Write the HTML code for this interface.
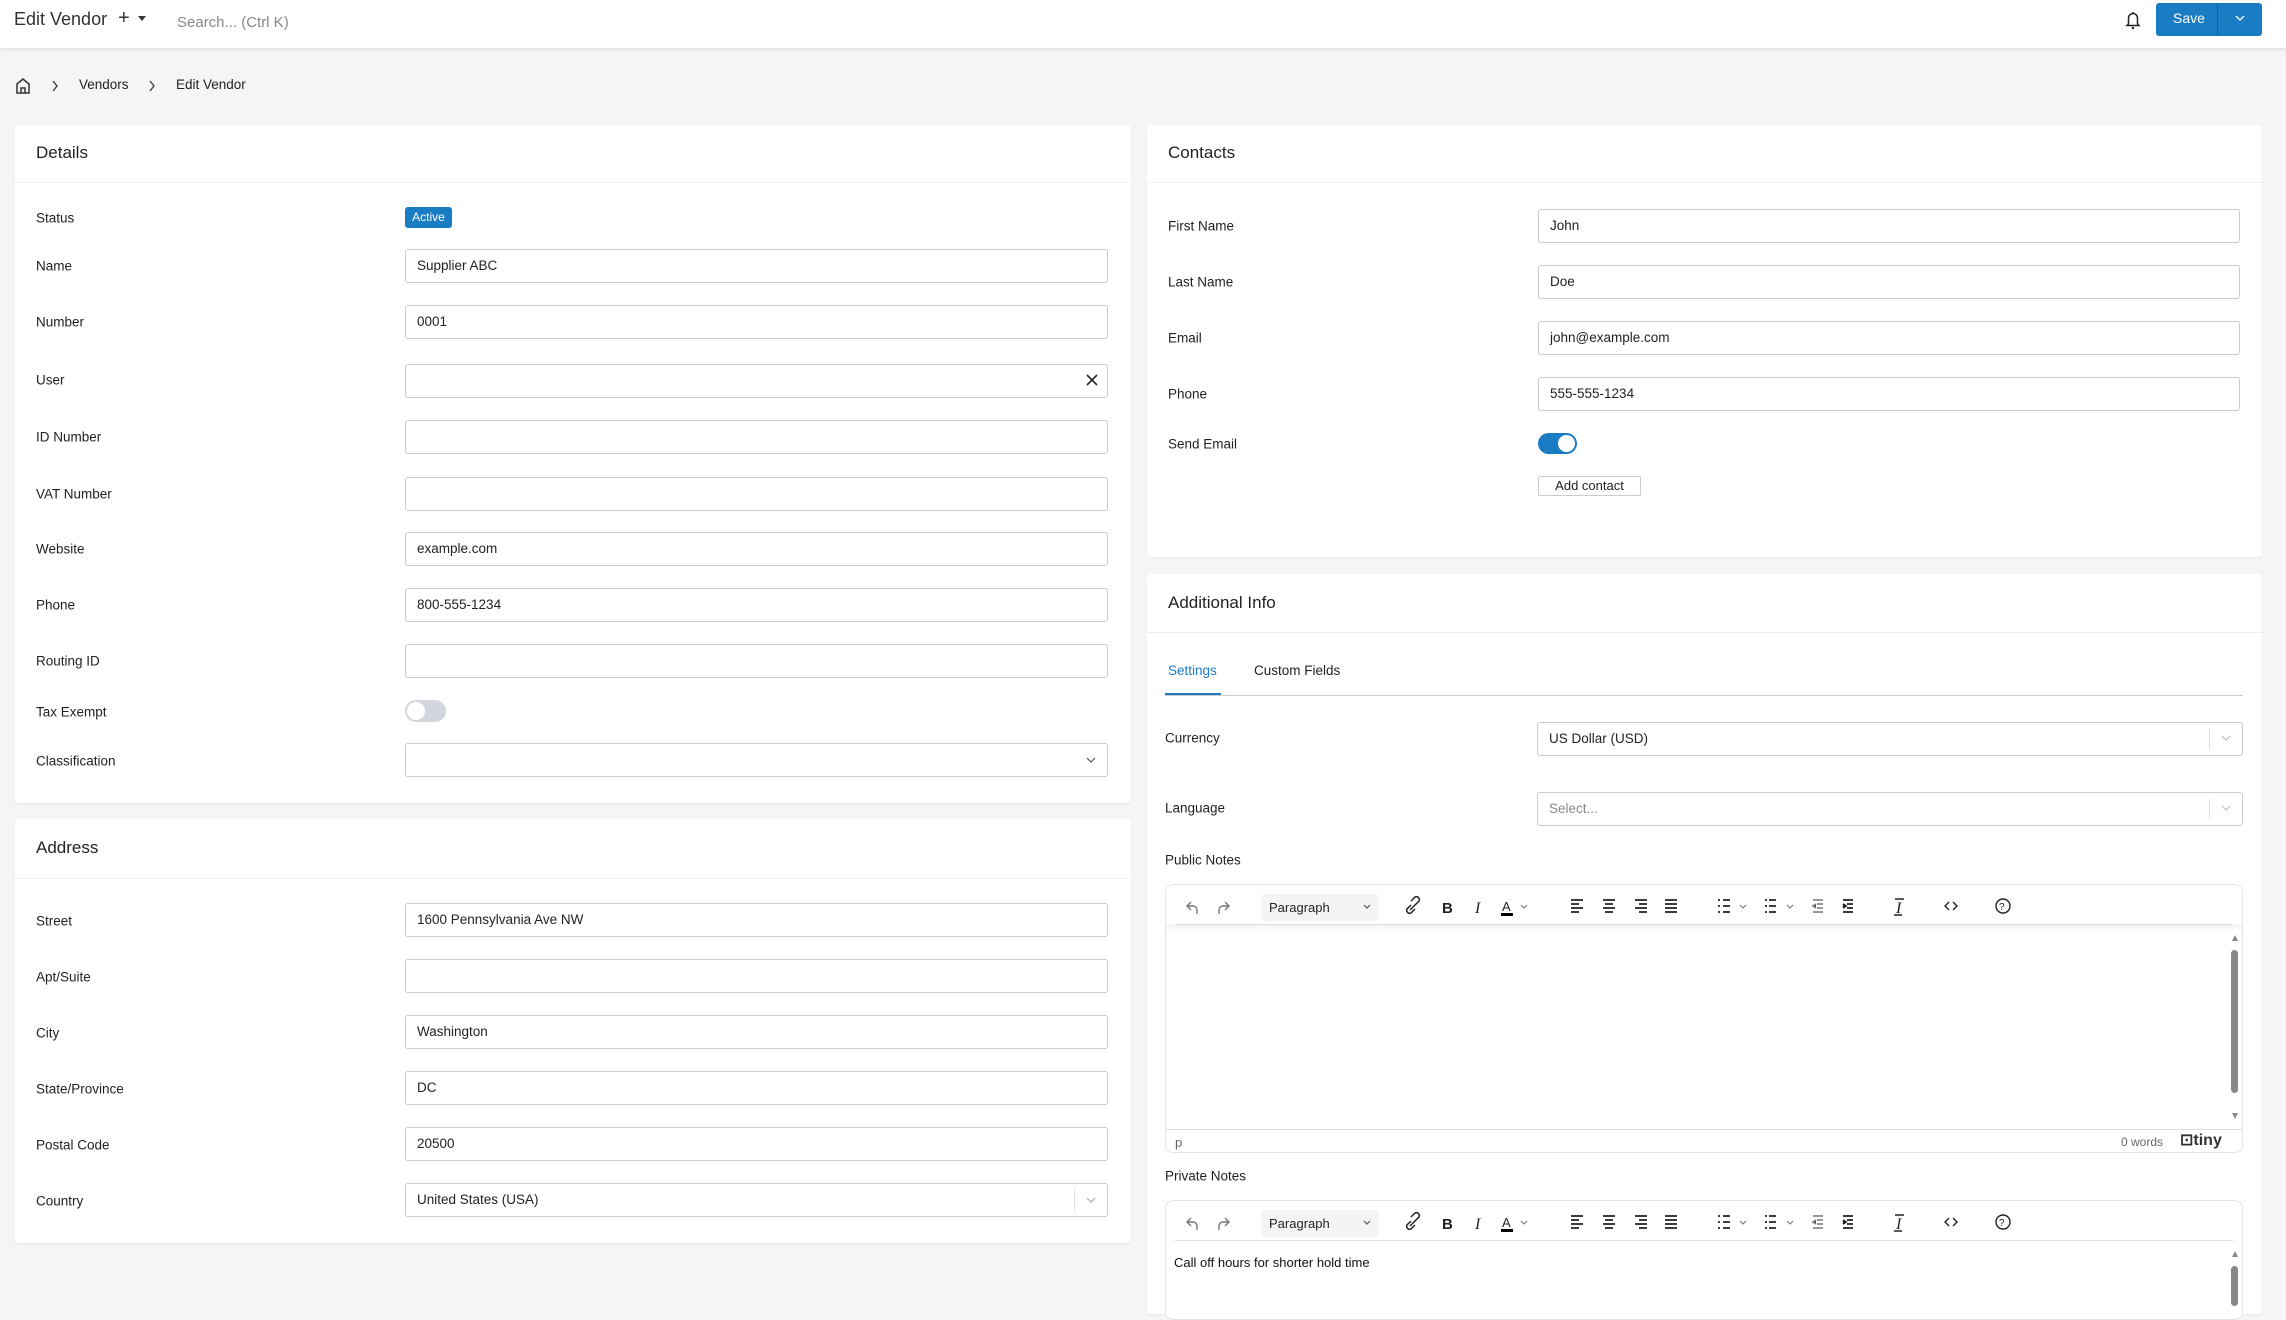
<!DOCTYPE html>
<html><head><meta charset="utf-8"><style>
*{box-sizing:border-box;margin:0;padding:0}
body{width:2286px;height:1297px;overflow:hidden;background:#f5f5f5;font-family:"Liberation Sans",sans-serif;color:#222;font-size:13.5px;position:relative}
.a{position:absolute}
.top{left:0;top:0;width:2286px;height:48px;background:#fff;box-shadow:0 2px 3px rgba(0,0,0,.08)}
.card{background:#fff;border-radius:4px;box-shadow:0 1px 2px rgba(0,0,0,.05)}
.h{font-size:17px;color:#222}
.hr{height:1px;background:#eee}
.lb{font-size:13.5px;color:#222;transform:translateY(-50%)}
.in{height:34px;border:1px solid #ccc;border-radius:3px;background:#fff;font-size:13.5px;line-height:32px;padding-left:11px;color:#222}
.sel .sep{position:absolute;right:32px;top:6px;bottom:6px;width:1px;background:#ddd}
</style></head><body>
<div class="a top"></div>
<div class="a" style="left:14px;top:9px;font-size:18px;color:#333">Edit Vendor</div>
<div class="a" style="left:118px;top:7px;font-size:20px;color:#333">+</div>
<div class="a" style="left:138px;top:16px;width:0;height:0;border-left:4px solid transparent;border-right:4px solid transparent;border-top:5px solid #333"></div>
<div class="a" style="left:177px;top:14px;font-size:15px;color:#888">Search... (Ctrl K)</div>
<svg class="a" style="left:2125px;top:10px" width="16" height="20" viewBox="0 0 16 20"><path d="M8 2v1M3.5 14V8a4.5 4.5 0 0 1 9 0v6l1.5 1.5H2z" fill="none" stroke="#222" stroke-width="1.5"/><circle cx="8" cy="18" r="1.2" fill="#222"/></svg>
<div class="a" style="left:2156px;top:3px;width:106px;height:33px;background:#1a7dc4;border-radius:3px"></div>
<div class="a" style="left:2217px;top:3px;width:1px;height:33px;background:#0f5e98"></div>
<div class="a" style="left:2173px;top:10px;font-size:14px;color:#fff">Save</div>
<svg class="a" style="left:2235px;top:14px" width="10" height="8"><path d="M1 2l4 4 4-4" fill="none" stroke="#fff" stroke-width="1.3"/></svg>

<svg class="a" style="left:15px;top:77px" width="16" height="17" viewBox="0 0 16 17"><path d="M2 7L8 2l6 5v9H2z M6 16v-5h4v5" fill="none" stroke="#333" stroke-width="1.5"/></svg>
<svg class="a" style="left:51px;top:80px" width="8" height="12"><path d="M2 1l4 5-4 5" fill="none" stroke="#333" stroke-width="1.3"/></svg>
<div class="a" style="left:79px;top:77px;font-size:13.5px">Vendors</div>
<svg class="a" style="left:148px;top:80px" width="8" height="12"><path d="M2 1l4 5-4 5" fill="none" stroke="#333" stroke-width="1.3"/></svg>
<div class="a" style="left:176px;top:77px;font-size:13.5px">Edit Vendor</div>

<!-- Details -->
<div class="a card" style="left:15px;top:125px;width:1116px;height:678px"></div>
<div class="a h" style="left:36px;top:143px">Details</div>
<div class="a hr" style="left:15px;top:182px;width:1116px"></div>
<div class="a lb" style="left:36px;top:218px">Status</div>
<div class="a" style="left:405px;top:207px;width:47px;height:21px;background:#1a7dc4;border-radius:3px;color:#fff;font-size:12px;line-height:21px;text-align:center">Active</div>
<div class="a lb" style="left:36px;top:266px">Name</div><div class="a in" style="left:405px;top:249px;width:703px">Supplier ABC</div>
<div class="a lb" style="left:36px;top:322px">Number</div><div class="a in" style="left:405px;top:305px;width:703px">0001</div>
<div class="a lb" style="left:36px;top:380px">User</div><div class="a in" style="left:405px;top:364px;width:703px"></div>
<svg class="a" style="left:1086px;top:374px" width="12" height="12"><path d="M1 1l10 10M11 1L1 11" stroke="#222" stroke-width="1.6"/></svg>
<div class="a lb" style="left:36px;top:437px">ID Number</div><div class="a in" style="left:405px;top:420px;width:703px"></div>
<div class="a lb" style="left:36px;top:494px">VAT Number</div><div class="a in" style="left:405px;top:477px;width:703px"></div>
<div class="a lb" style="left:36px;top:549px">Website</div><div class="a in" style="left:405px;top:532px;width:703px">example.com</div>
<div class="a lb" style="left:36px;top:605px">Phone</div><div class="a in" style="left:405px;top:588px;width:703px">800-555-1234</div>
<div class="a lb" style="left:36px;top:661px">Routing ID</div><div class="a in" style="left:405px;top:644px;width:703px"></div>
<div class="a lb" style="left:36px;top:712px">Tax Exempt</div>
<div class="a" style="left:405px;top:700px;width:41px;height:22px;background:#d3d6dc;border-radius:11px"><div style="position:absolute;left:2px;top:2px;width:18px;height:18px;border-radius:50%;background:#fff"></div></div>
<div class="a lb" style="left:36px;top:761px">Classification</div><div class="a in" style="left:405px;top:743px;width:703px"></div>
<svg class="a" style="left:1086px;top:756px" width="10" height="8"><path d="M1 2l4 4 4-4" fill="none" stroke="#555" stroke-width="1.2"/></svg>

<!-- Address -->
<div class="a card" style="left:15px;top:819px;width:1116px;height:424px"></div>
<div class="a h" style="left:36px;top:838px">Address</div>
<div class="a hr" style="left:15px;top:878px;width:1116px"></div>
<div class="a lb" style="left:36px;top:921px">Street</div><div class="a in" style="left:405px;top:903px;width:703px">1600 Pennsylvania Ave NW</div>
<div class="a lb" style="left:36px;top:977px">Apt/Suite</div><div class="a in" style="left:405px;top:959px;width:703px"></div>
<div class="a lb" style="left:36px;top:1033px">City</div><div class="a in" style="left:405px;top:1015px;width:703px">Washington</div>
<div class="a lb" style="left:36px;top:1089px">State/Province</div><div class="a in" style="left:405px;top:1071px;width:703px">DC</div>
<div class="a lb" style="left:36px;top:1145px">Postal Code</div><div class="a in" style="left:405px;top:1127px;width:703px">20500</div>
<div class="a lb" style="left:36px;top:1201px">Country</div><div class="a in sel" style="left:405px;top:1183px;width:703px">United States (USA)<div class="sep"></div></div>
<svg class="a" style="left:1086px;top:1196px" width="10" height="8"><path d="M1 2l4 4 4-4" fill="none" stroke="#aaa" stroke-width="1.2"/></svg>

<!-- Contacts -->
<div class="a card" style="left:1147px;top:125px;width:1115px;height:432px"></div>
<div class="a h" style="left:1168px;top:143px">Contacts</div>
<div class="a hr" style="left:1147px;top:182px;width:1115px"></div>
<div class="a lb" style="left:1168px;top:226px">First Name</div><div class="a in" style="left:1538px;top:209px;width:702px">John</div>
<div class="a lb" style="left:1168px;top:282px">Last Name</div><div class="a in" style="left:1538px;top:265px;width:702px">Doe</div>
<div class="a lb" style="left:1168px;top:338px">Email</div><div class="a in" style="left:1538px;top:321px;width:702px">john@example.com</div>
<div class="a lb" style="left:1168px;top:394px">Phone</div><div class="a in" style="left:1538px;top:377px;width:702px">555-555-1234</div>
<div class="a lb" style="left:1168px;top:444px">Send Email</div>
<div class="a" style="left:1538px;top:433px;width:39px;height:21px;background:#1a7dc4;border-radius:11px"><div style="position:absolute;right:2px;top:2px;width:17px;height:17px;border-radius:50%;background:#fff"></div></div>
<div class="a" style="left:1538px;top:476px;width:103px;height:20px;border:1px solid #ccc;border-radius:2px;font-size:13px;line-height:18px;text-align:center">Add contact</div>

<!-- Additional -->
<div class="a card" style="left:1147px;top:574px;width:1115px;height:740px"></div>
<div class="a h" style="left:1168px;top:593px">Additional Info</div>
<div class="a hr" style="left:1147px;top:632px;width:1115px"></div>
<div class="a" style="left:1168px;top:663px;font-size:13.5px;color:#1a7dc4">Settings</div>
<div class="a" style="left:1254px;top:663px;font-size:13.5px">Custom Fields</div>
<div class="a" style="left:1165px;top:695px;width:1078px;height:1px;background:#ccc"></div>
<div class="a" style="left:1165px;top:693px;width:56px;height:2px;background:#1a7dc4"></div>
<div class="a lb" style="left:1165px;top:738px">Currency</div><div class="a in sel" style="left:1537px;top:722px;width:706px">US Dollar (USD)<div class="sep"></div></div>
<svg class="a" style="left:2221px;top:734px" width="10" height="8"><path d="M1 2l4 4 4-4" fill="none" stroke="#bbb" stroke-width="1.2"/></svg>
<div class="a lb" style="left:1165px;top:808px">Language</div><div class="a in sel" style="left:1537px;top:792px;width:706px;color:#888">Select...<div class="sep"></div></div>
<svg class="a" style="left:2221px;top:804px" width="10" height="8"><path d="M1 2l4 4 4-4" fill="none" stroke="#bbb" stroke-width="1.2"/></svg>
<div class="a lb" style="left:1165px;top:860px">Public Notes</div>

<!-- editor 1 -->
<div class="a" style="left:1165px;top:884px;width:1078px;height:269px;border:1px solid #e5e5e5;border-radius:8px;background:#fff"></div>
<div class="a" style="left:1175px;top:924px;width:1058px;height:1px;background:#ddd"></div>
<div class="a" style="left:1166px;top:925px;width:1076px;height:6px;background:linear-gradient(#f2f2f2,#fff)"></div>
<div class="a" style="left:1166px;top:1129px;width:1076px;height:1px;background:#ddd"></div>
<div class="a" style="left:1175px;top:1135px;font-size:13px;color:#666">p</div>
<div class="a" style="left:2121px;top:1135px;font-size:12px;color:#666">0 words</div>
<div class="a" style="left:2180px;top:1130px;font-size:16px;font-weight:bold;color:#333">⊡tiny</div>
<div class="a" style="left:2232px;top:935px;width:0;height:0;border-left:3px solid transparent;border-right:3px solid transparent;border-bottom:6px solid #888"></div>
<div class="a" style="left:2231px;top:950px;width:7px;height:143px;border-radius:4px;background:#888"></div>
<div class="a" style="left:2232px;top:1113px;width:0;height:0;border-left:3px solid transparent;border-right:3px solid transparent;border-top:6px solid #888"></div>

<div class="a lb" style="left:1165px;top:1176px">Private Notes</div>

<!-- editor 2 -->
<div class="a" style="left:1165px;top:1200px;width:1078px;height:120px;border:1px solid #e5e5e5;border-radius:8px;background:#fff"></div>
<div class="a" style="left:1175px;top:1240px;width:1058px;height:1px;background:#ddd"></div>
<div class="a" style="left:1174px;top:1255px;font-size:13px;color:#111">Call off hours for shorter hold time</div>
<div class="a" style="left:2232px;top:1251px;width:0;height:0;border-left:3px solid transparent;border-right:3px solid transparent;border-bottom:6px solid #888"></div>
<div class="a" style="left:2231px;top:1266px;width:7px;height:40px;border-radius:4px;background:#888"></div>

<!-- toolbars -->
<svg width="0" height="0" style="position:absolute"><defs>
<g id="tb">
<path d="M26 -4l-4 4 4 4M22 0h6a4 4 0 0 1 4 4v4" fill="none" stroke="#777" stroke-width="1.4"/>
<path d="M60 -4l4 4-4 4M64 0h-6a4 4 0 0 0-4 4v4" fill="none" stroke="#777" stroke-width="1.4"/>
<rect x="96" y="-12" width="118" height="27" rx="3" fill="#f4f4f4"/>
<text x="104" y="6" font-family="Liberation Sans" font-size="13" fill="#222">Paragraph</text>
<path d="M199 -1l3 3 3-3" fill="none" stroke="#555" stroke-width="1.2"/>
<path d="M246 -1l-4 4a3 3 0 0 0 4 4l4-4M250 -1l4-4a3 3 0 0 0-4-4l-4 4M245 4l5-5" fill="none" stroke="#222" stroke-width="1.5"/>
<text x="277" y="7" font-family="Liberation Sans" font-weight="bold" font-size="15" fill="#222">B</text>
<text x="310" y="7" font-family="Liberation Serif" font-style="italic" font-size="16" fill="#222">I</text>
<text x="337" y="5" font-family="Liberation Sans" font-size="13" fill="#222">A</text>
<rect x="336" y="7" width="12" height="3" fill="#000"/>
<path d="M356 -1l3 3 3-3" fill="none" stroke="#777" stroke-width="1.1"/>
<g stroke="#222" stroke-width="1.8">
<path d="M406 -6h12M406 -2h8M406 2h12M406 6h8"/>
<path d="M438 -6h12M440 -2h8M438 2h12M440 6h8"/>
<path d="M470 -6h12M474 -2h8M470 2h12M474 6h8"/>
<path d="M500 -6h12M500 -2h12M500 2h12M500 6h12"/>
<path d="M553 -6h2M558 -6h7M553 0h2M558 0h7M553 6h2M558 6h7"/>
<path d="M600 -6h2M604 -6h7M600 0h2M604 0h7M600 6h2M604 6h7"/>
<path d="M648 -6h10M652 -2h6M652 2h6M648 6h10M651 -2l-3 2 3 2" stroke="#888"/>
<path d="M678 -6h10M682 -2h6M682 2h6M678 6h10M678 -2l3 2-3 2"/>
</g>
<path d="M575 -1l3 3 3-3M622 -1l3 3 3-3" fill="none" stroke="#777" stroke-width="1.1"/>
<text x="731" y="7" font-family="Liberation Serif" font-style="italic" font-size="16" fill="#222">I</text>
<path d="M729 9h8M730 -7h9" stroke="#222" stroke-width="1.4"/>
<path d="M784 -4l-4 4 4 4M788 -4l4 4-4 4" fill="none" stroke="#222" stroke-width="1.4"/>
<circle cx="838" cy="0" r="7" fill="none" stroke="#222" stroke-width="1.4"/>
<text x="834" y="4" font-family="Liberation Sans" font-size="10" fill="#222">?</text>
</g></defs></svg>
<svg class="a" style="left:1165px;top:884px" width="900" height="40"><use href="#tb" y="22"/></svg>
<svg class="a" style="left:1165px;top:1200px" width="900" height="40"><use href="#tb" y="22"/></svg>
</body></html>
